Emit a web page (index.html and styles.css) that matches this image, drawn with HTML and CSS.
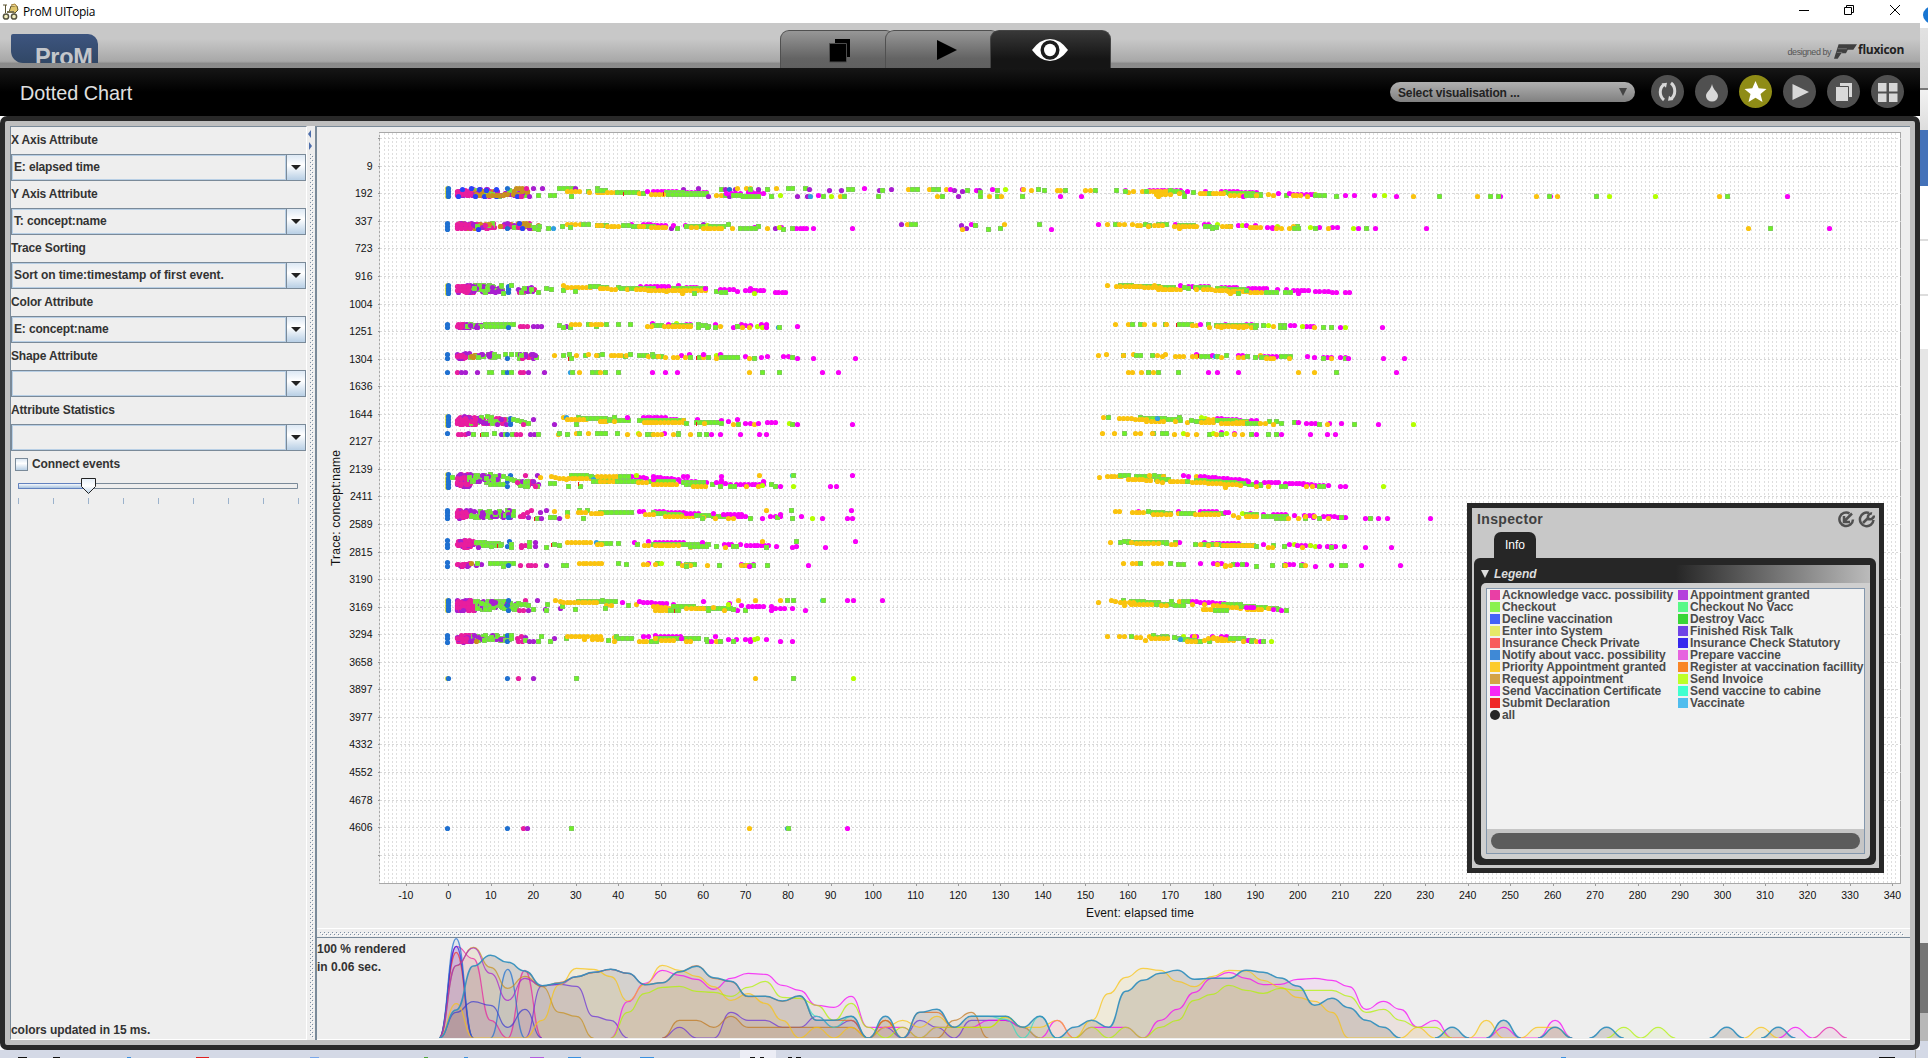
FILE: index.html
```html
<!DOCTYPE html>
<html lang="en">
<head>
<meta charset="utf-8">
<title>ProM UITopia</title>
<link rel="stylesheet" href="styles.css">
</head>
<body>
<div class="desktop">
  <div class="app">
    <header class="titlebar">
      <svg class="app-icon" width="17" height="18" viewBox="0 0 17 18"><path d="M1 2h4M3.500 2v8M7 9l2-6 6 0 1 4-3 3z" stroke="#5b5330" fill="#e0c56a"/><path d="M9 2l4-1 2 3" fill="#f4dc91" stroke="#a8843a"/><g fill="#f4f0c0" stroke="#55523f" stroke-width="1.500"><circle cx="4" cy="13.500" r="2.600"/><circle cx="12" cy="13.500" r="2.600"/></g><path d="M5 9h7" stroke="#77704e" stroke-width="2"/></svg>
      <span class="window-title">ProM UITopia</span>
      <svg class="window-controls" width="110" height="23" viewBox="1795 0 110 23" fill="none" stroke="#000"><path d="M1799 10.500h10"/><path d="M1844.500 7.500h7v7h-7zM1846.500 7v-1.500h7v7H1852"/><path d="M1890 5l10 10M1900 5l-10 10"/></svg>
    </header>
    <nav class="ribbon">
      <div class="logo"><span>ProM</span></div>
      <div class="tabs">
        <div class="tab"><svg width="24" height="26" viewBox="0 0 24 26"><path d="M7 2h15v18H7z" fill="#000"/><path d="M1.500 6.500h17v18.500h-17z" fill="#000" stroke="#4c4c4c"/></svg></div>
        <div class="tab"><svg width="22" height="22" viewBox="0 0 22 22"><path d="M1 1l20 10L1 21z"/></svg></div>
        <div class="tab tab-active"><svg width="36" height="22" viewBox="0 0 36 22"><path d="M0 11Q8 0 18 0T36 11Q28 22 18 22T0 11z" fill="#fff"/><ellipse cx="18" cy="11" rx="9.500" ry="9.800" fill="#1c1c1c"/><ellipse cx="18" cy="11" rx="6" ry="6.200" fill="#fff"/></svg></div>
      </div>
      <div class="credit"><span class="by">designed by</span>
        <svg width="23" height="17" viewBox="0 0 25 18"><path d="M5 1h20l-4 6h-6l-2 4H8l-4 6H0z" fill="#3f3f3f"/><path d="M4 6h10M3 10h6" stroke="#777"/></svg>
        <span class="flux">fluxicon</span></div>
    </nav>
    <div class="viewbar">
      <h1>Dotted Chart</h1>
      <div class="picker"><span>Select visualisation ...</span><i></i></div>
      <div class="tools">
        <div class="tool"><svg viewBox="0 0 33 33" fill="none" stroke="#d8d8d8" stroke-width="3"><path d="M13 9.500C8 13 8 21 13 25M20 8c5 4 5 12 0 16"/><path d="M10.500 8.500l5.500-.8-1 5zM22.500 25l-5.500.8 1-5z" fill="#d8d8d8" stroke="none"/></svg></div>
        <div class="tool"><svg viewBox="0 0 33 33"><path d="M17 9c1 6 6 8 6 12a6 5.500 0 0 1-12 0c0-4 5-6 6-12z" fill="#d8d8d8"/></svg></div>
        <div class="tool tool-on"><svg viewBox="0 0 33 33"><path d="M16.500 6l3.200 7.200 7.800.7-6 5.200 2 7.900-7-4.300L9.500 27l2-7.900-6-5.200 7.800-.7z" fill="#fff"/></svg></div>
        <div class="tool"><svg viewBox="0 0 33 33"><path d="M9.500 9l16.500 8-16.500 8z" fill="#d8d8d8"/></svg></div>
        <div class="tool"><svg viewBox="0 0 33 33"><path d="M13 8h12v14H13z" fill="#d8d8d8"/><path d="M8.500 11.500h13v15h-13z" fill="#d8d8d8" stroke="#505050"/></svg></div>
        <div class="tool"><svg viewBox="0 0 33 33" fill="#d8d8d8"><path d="M7 8h8.500v8.500H7zM18 8h8.500v8.500H18zM7 18.500h8.500V27H7zM18 18.500h8.500V27H18z"/></svg></div>
      </div>
    </div>
    <main class="frame">
      <aside class="settings">
        <label>X Axis Attribute</label><div class="combo"><span>E: elapsed time</span><b></b></div>
        <label>Y Axis Attribute</label><div class="combo"><span>T: concept:name</span><b></b></div>
        <label>Trace Sorting</label><div class="combo"><span class="wide">Sort on time:timestamp of first event.</span><b></b></div>
        <label>Color Attribute</label><div class="combo"><span>E: concept:name</span><b></b></div>
        <label>Shape Attribute</label><div class="combo"><span></span><b></b></div>
        <label>Attribute Statistics</label><div class="combo"><span></span><b></b></div>
        <div class="check"><i></i><span>Connect events</span></div>
        <svg class="slider" width="296" height="30" viewBox="11 477 296 30">
          <defs><linearGradient id="fillg" x2="0" y2="1"><stop offset="0" stop-color="#fff"/><stop offset="1" stop-color="#9dbbdc"/></linearGradient><linearGradient id="knob" x2="0" y2="1"><stop offset="0" stop-color="#e4eef8"/><stop offset=".5" stop-color="#fff"/><stop offset="1" stop-color="#b8cfe5"/></linearGradient></defs>
          <path d="M18.500 483.500h279v5h-279z" fill="#eee" stroke="#7a8a99"/><path d="M18.500 483.500h66v5h-66z" fill="url(#fillg)" stroke="#6382bf"/>
          <path d="M18.500 498v6m35-6v6m35-6v6m35-6v6m35-6v6m35-6v6m35-6v6m35-6v6m35-6v6" stroke="#9bb2cc"/>
          <path d="M81.500 478.500h14v8l-7 7-7-7z" fill="url(#knob)" stroke="#222"/>
        </svg>
        <div class="status">colors updated in 15 ms.</div>
      </aside>
      <div class="split-v"><svg width="8" height="914" viewBox="307 126 8 914">
        <defs><pattern id="grip" x="310" y="2" width="4" height="4" patternUnits="userSpaceOnUse"><path d="M0 0h1v1H0zM2 2h1v1H2z" fill="#7c8ea2"/><path d="M1 1h1v1H1zM3 3h1v1H3z" fill="#fff"/></pattern></defs>
        <path d="M310 154h4v884h-4z" fill="url(#grip)"/>
        <path d="M311 130v8l-3-4z" fill="#4c6dab"/><path d="M309 142v8l3-4z" fill="#4c6dab"/></svg></div>
      <section class="views">
        <svg id="chart" class="chart" width="1593" height="801" viewBox="317 127 1593 801"></svg>
        <div class="split-h"><svg width="1593" height="9" viewBox="317 928 1593 9">
          <defs><pattern id="griph" x="320" y="932" width="4" height="4" patternUnits="userSpaceOnUse"><path d="M0 0h1v1H0zM2 2h1v1H2z" fill="#7c8ea2"/><path d="M1 1h1v1H1zM3 3h1v1H3z" fill="#fff"/></pattern></defs>
          <path d="M320 932h1584v4H320z" fill="url(#griph)"/><path d="M317 928.500h1593" stroke="#fff"/></svg></div>
        <div class="density">
          <svg id="density" width="1593" height="101" viewBox="317 938 1593 101"></svg>
          <p>100 % rendered<br>in 0.06 sec.</p>
        </div>
      </section>
    </main>
  </div>
  <div class="behind"><i class="orb"></i><i class="b1"></i><i class="b2"></i><i class="b3"></i><i class="b4"></i><i class="b5"></i><i class="b6"></i></div>
</div>
<footer class="taskbar"><svg width="1928" height="8" viewBox="0 1050 1928 8"><path d="M740 1050h36v8h-36z" fill="#ecedf5"/><path d="M18 1057.500h9M53 1057.500h7M750 1057.500h5m5 0h4m24 0h4m4 0h5M1879 1057.500h16" stroke="#111"/><path d="M196 1057.500h13" stroke="#e02020"/><path d="M530 1057.500h14" stroke="#b45ce0"/><path d="M568 1057.500h13m59 0h14M127 1057.500h4M464 1057.500h4M1561 1057.500h5" stroke="#3a90e0"/><path d="M310 1057.500h9" stroke="#7aa7ea"/><path d="M424 1057.500h4" stroke="#4ea63a"/><path d="M1915.500 1050v8" stroke="#aaa"/></svg></footer>

<section class="inspector">
  <div class="insp-head"><strong>Inspector</strong>
    <svg width="37" height="17" viewBox="0 0 37 17" fill="none" stroke="#505050" stroke-width="2.500"><path d="M11.500 2.300A6.800 6.800 0 1 0 15 8.500M14 2.500L6 10.500M6 5v6h6"/><path d="M31 2A6.800 6.800 0 1 0 35.500 9"/><path d="M25 12l6-6M30 8c-1-4 2-6 4-5.500M30 8c3 1 6-1 6-3.500"/></svg></div>
  <div class="insp-tab">Info</div>
  <div class="insp-body">
    <div class="legend-head"><i></i><em>Legend</em></div>
    <div class="legend-wrap"><div class="legend-box">
      <div id="legend" class="legend"></div>
      <div class="scroll"><i></i></div>
    </div></div>
  </div>
</section>
<script src="chart.js"></script>
</body>
</html>
```
FILE: styles.css
```css
* { box-sizing: border-box; }
body { margin: 0; width: 1928px; height: 1058px; overflow: hidden; font: bold 12px "Liberation Sans", Arial, sans-serif; color: #333; background: #fff; }
svg { display: block; flex: none; }
.desktop { display: grid; grid-template-columns: 1920px 8px; height: 1050px; }
.app { display: flex; flex-direction: column; background: #fff; }
.titlebar { height: 23px; display: flex; align-items: center; background: #fff; }
.app-icon { margin-left: 2px; }
.window-title { margin-left: 4px; font: 12px "Open Sans", "Noto Sans", sans-serif; letter-spacing: -.35px; color: #000; flex: 1; }
.window-controls { margin-right: 15px; }

.ribbon { height: 45px; display: grid; grid-template-columns: 780px 331px 1fr; background: linear-gradient(#c8c8c8 35%, #a8a8a8 85%, #8a8a8a 90%, #8c8c8c); }
.logo { width: 87px; height: 29px; margin: 11px 0 0 11px; border-radius: 2px 10px 0 12px; background: linear-gradient(#3d557f, #314766); overflow: hidden; }
.logo span { display: block; margin: 12px 0 0 24px; font-size: 23.500px; line-height: 23px; color: #c4c6ca; letter-spacing: -.3px; }
.tabs { display: flex; align-items: flex-end; }
.tab { width: 115px; height: 38px; margin-right: -10px; border: 1px solid #505050; border-bottom: 0; border-radius: 9px 9px 0 0; background: linear-gradient(#979797, #636363 75%, #606060); display: flex; justify-content: center; align-items: center; }
.tab + .tab { padding-left: 8px; }
.tab:first-child { padding-left: 4px; }
.tab.tab-active { width: 121px; margin: 0; padding: 0 1px 0 0; background: linear-gradient(#383838, #151515 75%); border-color: #444; }
.credit { display: flex; justify-content: flex-end; align-items: center; padding: 12px 16px 0 0; font-size: 10px; }
.by { font-weight: normal; font-size: 9px; color: #555; margin-right: 3px; letter-spacing: -.45px; }
.flux { font: bold 12px "Open Sans", sans-serif; color: #222; letter-spacing: -.3px; margin: -5px 0 0 1px; }

.viewbar { height: 48px; display: flex; align-items: center; padding: 0 16px 0 20px; background: linear-gradient(#161616, #000 50%); }
.viewbar h1 { flex: 1; margin: 0; padding-top: 2px; font-weight: normal; font-size: 19.800px; color: #e0e0e0; }
.picker { width: 245px; height: 20px; border-radius: 10px; background: linear-gradient(#b0b0b0, #808080); display: flex; align-items: center; justify-content: space-between; padding: 1px 8px 0; color: #222; margin-right: 16px; }
.picker span { letter-spacing: -.13px; }
.picker i { border: 4px solid transparent; border-top: 8px solid #444; border-bottom: 0; margin-top: -2px; }
.tools { display: flex; gap: 11px; margin-top: -1px; }
.tool { width: 33px; height: 33px; border-radius: 50%; background: #505050; }
.tool-on { background: #8f8c16; }

.frame { flex: 1; border: 5px solid #282828; padding: 5px; border-radius: 7px; background: #bebebe; display: grid; grid-template-columns: 297px 8px 1595px; }
.settings { background: #eee; border: 1px solid #7a8a99; border-width: 1px 0 0 1px; border-bottom: 1px solid #fff; border-right: 1px solid #fff; display: flex; flex-direction: column; }
.settings label { height: 27px; line-height: 26px; letter-spacing: -.15px; }
.combo { height: 27px; border: 1px solid #7a8a99; display: grid; grid-template-columns: 1fr 19px; letter-spacing: -.15px; }
.combo span { border: 1px solid #b8cfe5; padding-left: 1px; line-height: 22px; }
.combo .wide { letter-spacing: -.08px; }
.combo b { border-left: 1px solid #7a8a99; background: linear-gradient(#dce8f4, #fff 40%, #b8cfe5); display: flex; align-items: center; justify-content: center; }
.combo b::after { content: ""; border: 5px solid transparent; border-top-color: #222; border-bottom: 0; }
.check { height: 26px; display: flex; align-items: center; gap: 4px; padding-left: 4px; letter-spacing: -.1px; }
.check i { width: 13px; height: 13px; border: 1px solid #7a8a99; background: linear-gradient(#dce8f4, #fff 40%, #b8cfe5); }
.status { margin-top: auto; height: 19px; line-height: 20px; letter-spacing: -.06px; }
.split-v { background: #eee; overflow: hidden; }
.views { display: flex; flex-direction: column; border-left: 2px solid #7a8a99; border-top: 1px solid #7a8a99; background: #eee; }
.split-h { height: 10px; border-bottom: 1px solid #7a8a99; }
.density { height: 102px; position: relative; border-bottom: 2px solid #fff; }
.density p { position: absolute; left: 0; top: 2px; margin: 0; line-height: 18px; }
.chart text { font-weight: normal; font-size: 10.500px; fill: #111; }
.chart .axis { font-size: 12px; }

.behind { display: flex; flex-direction: column; background: linear-gradient(#fff 28px, #e6e6e6 28px); overflow: hidden; }
.orb { width: 20px; height: 18px; margin: 6px 0 4px 3px; border-radius: 50%; background: #1976d2; box-shadow: 0 0 0 1px #fff; flex: none; }
.b1 { height: 102px; background: linear-gradient(#e2e2e2, #d5d5d5 60px, #777 60px, #777 62px, #f2f2f2 62px, #ddd); }
.b2 { height: 56px; background: #4472b9; }
.b3 { height: 163px; background: repeating-linear-gradient(#fff 0 53px, #ddd 53px 55px); }
.b4 { height: 594px; background: #e6e6e6; }
.b5 { height: 70px; background: #757575; }
.b6 { flex: 1; background: linear-gradient(#b8b8b8 28px, #d4d9e6 28px); }
.taskbar { height: 8px; background: #d4d9e6; }

.inspector { position: absolute; left: 1467px; top: 503px; width: 417px; height: 370px; border: 5px solid #282828; background: #c8c8c8; padding: 0 3px 3px 2px; display: flex; flex-direction: column; }
.insp-head { height: 24px; display: flex; justify-content: space-between; align-items: center; padding: 0 1px 2px 3px; font-size: 14px; color: #404040; }
.insp-head strong { letter-spacing: .35px; margin-top: -1px; }
.insp-tab { width: 42px; height: 26px; margin-left: 20px; border-radius: 7px 7px 0 0; background: #262626; color: #fff; text-align: center; line-height: 26px; font-weight: normal; }
.insp-body { flex: 1; border-radius: 6px; background: #262626; padding: 7px 6px 6px 7px; display: flex; flex-direction: column; }
.legend-head { height: 18px; display: flex; align-items: center; gap: 5px; color: #ddd; background: linear-gradient(90deg, #262626 50%, #bbb); }
.legend-head i { border: 4.500px solid transparent; border-top: 8px solid #ddd; border-bottom: 0; }
.legend-wrap { flex: 1; border-radius: 5px 0 5px 5px; background: #cfcfcf; padding: 5px; }
.legend-box { height: 100%; border: 1px solid #8397ad; background: #f1f1f1; display: flex; flex-direction: column; }
.legend { flex: 1; padding: 0 0 0 3px; display: grid; grid-template-columns: 188px 1fr; grid-auto-rows: 12px; align-content: start; color: #4b4b4b; letter-spacing: -.08px; }
.legend div { display: flex; align-items: center; gap: 2px; white-space: nowrap; }
.legend i { width: 10px; height: 10px; flex: none; }
.legend .dot { border-radius: 50%; }
.scroll { height: 24px; background: #c6c6c6; padding: 4px; }
.scroll i { display: block; height: 16px; border-radius: 8px; background: #5c5c5c; }
```
FILE: chart.js
```js
/* ---- legend ---- */
var legend = [['#e93fa5','Acknowledge vacc. possibility'],['#b43fdc','Appointment granted'],['#8af24f','Checkout'],['#57f987','Checkout No Vacc'],
['#4462f7','Decline vaccination'],['#38d636','Destroy Vacc'],['#e6ea68','Enter into System'],['#6f42e6','Finished Risk Talk'],
['#f85c5c','Insurance Check Private'],['#3627ee','Insurance Check Statutory'],['#3f89d6','Notify about vacc. possibility'],['#e663df','Prepare vaccine'],
['#fccb2b','Priority Appointment granted'],['#f98626','Register at vaccination facillity'],['#d3a347','Request appointment'],['#bdff27','Send Invoice'],
['#f627f6','Send Vaccination Certificate'],['#3fffcf','Send vaccine to cabine'],['#ef2727','Submit Declaration'],['#4fbdee','Vaccinate'],['#262626','all']];
document.getElementById('legend').innerHTML = legend.map(function (l) {
  return '<div><i' + (l[1] === 'all' ? ' class="dot"' : '') + ' style="background:' + l[0] + '"></i>' + l[1] + '</div>';
}).join('');

/* ---- dotted chart ---- */
var out = [];
out.push('<rect x="379.5" y="132.500" width="1521" height="751" fill="#fff" stroke="#a8a8a8"/>');
var vx = '', v;
for (v = -16; v <= 341; v++) vx += 'M' + (Math.floor(448.3 + v * 4.2465 - .5) + .5) + ' 133V883';
out.push('<path d="' + vx + '" stroke="#dedede" stroke-dasharray="2 2" fill="none"/>');
var names = [9,192,337,723,916,1004,1251,1304,1636,1644,2127,2139,2411,2589,2815,3190,3169,3294,3658,3897,3977,4332,4552,4678,4606];
for (v = -1; v <= 25; v++) {
  var gy = Math.round(165.7 + v * 27.56) + .5;
  out.push('<path d="M380 ' + gy + 'H1901" stroke="#d8d8d8" stroke-dasharray="2 2"/><path d="M378 ' + gy + 'h2" stroke="#999"/>');
  if (v >= 0 && v < 25) out.push('<text x="372.500" y="' + (gy + 3) + '" text-anchor="end">' + names[v] + '</text>');
}
for (v = -10; v <= 340; v += 10) {
  var tx = 448.3 + v * 4.2475;
  out.push('<path d="M' + (Math.round(tx) + .5) + ' 884v2" stroke="#999"/><text x="' + tx + '" y="898.500" text-anchor="middle">' + v + '</text>');
}
out.push('<text class="axis" x="1086" y="917" textLength="108">Event: elapsed time</text>');
out.push('<text class="axis" transform="translate(340 566) rotate(-90)" textLength="116">Trace: concept:name</text>');

var colors = { b:'#1f70d0', p:'#e81e9e', v:'#a81ed0', o:'#fac30f', m:'#f800f8', l:'#b4ff00', k:'#2a42f8', t:'#c8901e', c:'#38e0c8', s:'#30a0e0', y:'#e0e04f' };
var seed = 7;
function rnd() { seed = (seed * 16807) % 2147483647; return seed / 2147483647; }
function dot(c, x, y) {
  x = Math.round(x - .3); y = Math.round(y - .3);
  if (c === 'g') out.push('<rect x="' + (x - 2) + '" y="' + (y - 2) + '" width="5" height="5" fill="#86bd72"/><circle cx="' + (x + .5) + '" cy="' + (y + .5) + '" r="2.300" fill="#70ee2c"/>');
  else if (c === 'r') out.push('<rect x="' + (x - 2) + '" y="' + (y - 1) + '" width="1" height="4" fill="#ef1b1b"/>');
  else out.push('<circle cx="' + (x + .5) + '" cy="' + (y + .5) + '" r="2.600" fill="' + colors[c] + '"/>');
}
/* token: color x[-x2] @ y[-y2]; a leading * scatters #n events over the box */
function plot(x0, y0, sx, text) {
  text.trim().split(/\s+/).forEach(function (t) {
    var m = /^(\*?)([a-z]+)([\d.]+)(?:-([\d.]+))?@([\d.]+)(?:-([\d.]+))?(?:#(\d+))?$/.exec(t);
    if (!m) return;
    var a = +m[3], b = m[4] ? +m[4] : a, c = +m[5], d = m[6] ? +m[6] : c, i, n, f;
    if (m[1]) {
      n = Math.round(m[7] * 1.5);
      for (i = 0; i < n; i++) dot(m[2][Math.floor(rnd() * m[2].length)], x0 + (a + (b - a) * rnd()) / sx, y0 + (c + (d - c) * rnd()) / 3);
      return;
    }
    n = Math.max(Math.round(Math.abs(b - a) / 11.5), Math.round(Math.abs(d - c) / 9), 0);
    for (i = 0; i <= n; i++) { f = n ? i / n : 0; dot(m[2], x0 + (a + (b - a) * f) / sx, y0 + (c + (d - c) * f) / 3); }
  });
}
plot(420, 160, 3, `
y81@84-110 b86@84-110 *pv112-210@88-108#40 *gvt160-330@92-108#45 p112-150@94 p112-150@102 k128@89 k155@86 k178@87 k200@90 k229@88 k115@109 k166@108 k193@109 k229@109 b263@84 t290-308@85 p319@85 v340@85 t205-250@105 k292@109 p304@108 v328@109 v367@85 g355@106 g391-403@106 g418-456@85 g454@109 v466@85 o442-478@94 g505@94 o508@97 g532@86 o532-550@97 g532-555@92 o562-586@98 g592-652@97 r616@100 o658@100 g670@100 m683@94 m700-860@94-97 v790@88 v836@86 g740-860@97-100 o694-730@102 g745-850@103 r735@100 v865@109 g905@88 v915@88 b928@88 v945@88 o953@84 o978-990@85 o890-905@106 g916@106 v928@109 m920-960@100 m985-1030@97-100 g940-960@106 g970-1000@108 g1015@109 g992@88 v1016@88 g1042@88 g1054@109 o1069@85 l1081@106 g1105-1117@86 g1156@86 v1168@88 v1132@109 v1162@109 s1172@109 m1195@106 g1210@109 v1228@91 l1234@109 o1262@109 g1273@109 v1264@91 g1285-1297@88 m1333@85 g1375@109 v1378@91 g1387@91 v1414@88
b83@190-208 *pvt110-215@190-206#30 p112-150@192 p112-150@204 *gvtp160-360@190-206#45 k175@207 b263@205 k298@190 k307@206 g385@205 s400@205 g355@209 g428@199 o442-480@193 g451@202 g490-505@193 g532-560@196 o532-545@195 o562-595@198 m634@192 g610-625@196 m670-735@193-196 g640-700@200 o658-670@199 o694-736@203 v754@205 m760@196 g772@205 m797@196 v850@192 g800-850@200 o815-830@202 l862@196 m874@198 g925@194 g870-910@200 o850-905@204 o937@204 g962@205 m1003-1010@202 g1015@199 g975-1005@205 o1042@205 v1065@205 m1083@202 l1078@203 g1090@208 m1130-1160@205 g1117@205 m1180@205 m1297@205
y81@376-400 b86@376-400 *pv112-160@376-398#25 *ggv155-250@376-398#34 p112-145@380 p112-145@392 b266@380-398 g273@376 g251@400 v226@397 *gpv290-345@383-398#12 g379@385 g394@388 g355@397 g430@391 o430@377 o442-510@382 g466@394 g510-560@378-382 g595@382 o540-585@384-388 g605-625@384 m661@379 o622@388 g634@386 m680-745@380 m775@376 m800-830@382 g640-700@385 g760-855@386 o650-740@388-393 o745-855@392 o787@400 g823@400 m855@385 g890@395 m900-940@388 m952@394 g905-917@397 m976-1000@391 m1000-1030@392 m991@386 l1003@400 m1066-1096@396
b83@493-503 *pv112-150@492-503#22 p112-136@498 *gv140-190@493-503#12 v172@502 g196-280@493 g200-256@500 b265@502 p300-322@498 v340-364@500 g418@496 v440@499 g430@502 g451@502 o454@493 o466-478@493 g505@493 g529@499 o515-545@493 g560@493 g595@493 g631@493 m697@491 g700-724@496 o683-695@498 m745@493 l770@491 m800-812@492 g760-810@496 o733-812@500 g835-865@493-499 g835@502 g862@502 m886@493 g886@502 o901@499 m940@502 m965@493 m977-990@496 g952@499 o967@502 o988@502 l1013@499 m1025-1039@494 l1027@502 m1039@502 s1076@502 g1079@502 m1132@499
b83@583-595 *pv112-150@581-595#22 p112-150@588-592 *gvt150-240@581-592#16 g229@590 v205@583 g256@583 g274@583 b263@595 *gpv290-350@581-595#12 o403@586 g430@586 g448@583 r450@594 g454@595 o469@586 g496@586 o505@583 g532@586 g547@583 o529@587 o574-605@587 g617@589 o619@587 g631@583 g658-680@587 o685@589 g697@584 g700-724@588 o715@590 o736@592 m784@586 m808@583 o760-772@592 g810@592 o797@592 g838@592 r835@591 o850@591 m850@583 g865@592 l888@586 m901@583 o888@595 g905-952@592 m976@590 o988@595 g1003@595 m1024@592 m1042@590 m1090-1105@590 g1117@592 m1132@595 m1180@595 m1306@595
b83@637 p112@637 v124-136@637 v172@637 g208-214@637 g250@637 b263@637 g275@637 p300-310@637 v325@637 v373@637 s450@637 g456@637 o479@637 g517-532@637 o541@637 g556@637 g595@637 m697@637 m735@637 m772@637 o989@637 g1027@637 g1077@637 m1207@637 m1255@637
y81@770-796 b86@770-796 *pv112-160@770-794#30 p112-140@782 p112-140@790 *ggvp150-260@770-792#38 b270@775-793 g280-325@778-790 p310@793 v340@778 v403@793 s469@790 g469@793 o430@773 o442-500@777 s440@773 g475-580@773-777 o442-490@779 o542-560@784 g568-625@781 g583@773 o583@784 m622@772 g658@782 m670-735@773 m750-770@777 g670-790@780 o672-690@786 o700-720@787 o733-790@788 o790@782 g800@790 m832@778 g830-895@787 r836@789 o853@791 m904@781 g904@790 m925@784 m952@778 o940@793 g956@793 m976-990@790 o1003@793 m1015@790 m1042-1066@787 l1108@790 g1116@793 m1132@793 m1297@793
b83@820-824 p115-135@822 v145@820 g160@823 g190-200@822 r187@823 g223@820 v244@823 g256@823 b263@822 g277@823 p290-302@823 v331-343@823 g355@823 o415@823 g418@821 g442@823 o469@820 g478@820 o505@820 g532-556@820 g592@820 o622@823 l655@820 o658@823 g682@823 m733@820 g697@823 o700-725@823 g775@820 o760@823 g775@823 o811@823 g838@823 g860@823 m874@823 m901@823 m961@823 m1018@823 m1039@823
y81@944-982 b86@944-982 g97@952 *pv112-150@944-980#38 p112-150@956 p112-150@970 *ggv145-240@944-966#40 g210-250@972 b270@946 b263@963 b263@979 g250-295@950-964 p316@946 v352@946 *pvg290-360@962-980#14 o361@952 g391-403@969 g445@979 g482@979 r482@970 o395-440@950-958 g455-500@945 o445-510@956 g515-595@950-956 o532-590@948 s520@958 g520-560@963 o540-580@964 m635-680@948-954 g601-625@950 l648@945 g592-660@964 m700-775@950-958 m790-802@950 g690-760@963 o655-680@968 o700-770@972 m700@958 m780-860@964-966 g790-850@968 g800-850@973 o820-855@979 m904@950-960 g877@973 m890-930@968-972 g901@979 m950-1030@972 g932-944@979 m1030@964 o979@979 o1018@946 o1015@979 l1028@976 g1054@973 g1066@979 m1081@979 c1117@946 g1120@946 l1119@979 m1231@979 m1249@979 m1297@946
b83@1050-1074 *pv112-150@1050-1074#28 p112-140@1058 p112-140@1070 *ggv150-280@1050-1072#38 b265@1072 p300-334@1070-1052 v361@1058 v379@1051 v325@1072 p310@1070 g352@1074 r349@1074 v364@1074 g391-403@1072 v418@1075 o403@1054 g442@1056 o442@1068 g478@1052 g502@1050 o475-495@1057 g540-575@1056 o515-545@1060 g490@1075 g590-635@1058 m658-670@1054 m706-790@1054-1058 g700-800@1058-1066 o676-700@1064 o735-820@1070 m800-835@1060 g830-870@1066 g880-910@1070 o850@1072 m880@1060 m910-965@1064 o886@1075 o925-940@1074 g848@1074 m955-975@1068 o1039@1051 g991@1074 m1027@1076 m1050@1070 m1066-1080@1068 g1072@1073 m1081@1063 g1114@1051 g1117@1074 m1144@1069 l1177@1076 m1207@1076 m1295@1051 m1283@1076 m1297@1076`);
plot(420, 520, 3, `
b83@62-82 *pvp112-165@62-82#30 p112-150@72 g170-245@66-72 g175-230@76 v175@82 g215@80 g241@76 r238@76 b267@64 b263@80 g275@82 g275@72 p305-316@76 p305@82 g328@66 g328@78 v347@66 v347@78 g379@82 g403@73 r400@73 g418@76 o442-512@68 s529@66 g540-570@69 o532-545@73 g595@70 m643@67 g652@73 m685@65 o672-685@76 m706-790@68 g700-790@72 o706-760@76 o775@76 g800-865@74 m847@68 o811@82 g810-860@79 g889@79 m913-935@73 o917@82 m961@73 g940-950@80 m980-1045@76 o1027@65 g1039@82 m1069@79 g1128@65 m1117@82 m1129@79 m1216@82 m1306@65
b83@128-138 *pv112-150@130-138#14 t155@131 v168@136 v185@133 g172@130 g210-280@130 g250@139 b265@136 p301@136 p325-345@136 v379@136 g430-440@136 o478-545@130 g595@131 g619@133 m685@130 o670-682@133 m712@130 g712@131 l724@130 o706@133 m777@130 g775@131 g800-822@132 o786-810@135 g799@139 g898@136 o862@136 m965@133 m1000@133 g976-1000@135 o965-980@136 m988@139 g1042@136 m1165@136
y81@240-272 b86@240-272 *pv112-165@240-272#42 p112-145@250 p112-145@262 g165-250@245-258 *ggv170-290@242-268#38 v130@270 b265@241 b263@256 b264@271 p316@241 g295-325@250-256 p298-310@271 v353@241 v325@271 g340@267 g382@253 v375@268 g379@271 o407@241 o420@244 v422@265 g427@258 g466@268 g475-585@244 o430-530@248 o560-575@256 g547@240 g557@265 m607@247 g625@256 o650@253 m658@244 m670-740@247-250 o700-760@258-265 m760@252 g760-820@258 m850@244 o705-740@271 g750-775@270 r770@271 g832-930@264 o800-850@266 g865@271 o880@262 m928@250 l925@253 o955@241 o913@271 m952@271 m964@256 g976@271 m985-1030@260 m1054@260 m1066-1093@266 m1054@271 o1006@241 o1081@241 g1103@241 g1120@241 m1117@265 c1207@241 g1210@241 m1156@270 m1282@241 m1300@241 m1387@241 g940@268
b83@345-367 *pvp112-160@345-366#30 p112-140@356 *ggv160-280@346-362#34 t170@364 b263@346 b263@364 g275@355 g274@346 p292@355 p295-307@364 p304@350 v316@352 g316@360 v328-340@364 g364@349 g355@364 v403@355 g391@364 g439@355 o442@349 o454-540@350 o493@358 o517-545@358 g565@361 o583@352 g590@349 g595-635@356 o583@364 m670-685@349 m706@347 m720-780@349 o658-680@364 g694-710@364 g710-800@355 o706@355 o725-760@360 m785@355 g812-835@356 o800-812@364 g860@358 m886@349 g863@364 m874@364 o889@364 g901@364 m925@358 m950@358 g940@364 m976-990@358 l1003@358 m990@364 l1013@355 m1039@358 m1081@364 m1117@364
y81@475 b85@475 b263@475 p295@475 v340@475 g469@475 o1006@475 g1120@475 l1300@475
b83@925 b263@925 p310@925 v322@925 g454@925 o988@925 s1101@925 g1105@925 m1282@925`);
plot(740, 0, 2.613, `
o440@568 g450-462@569 o494@568 g505-518@568 o538@568 m550@568 v560@572 v581@574 g594@571 m618@571 v624@571 g628@577 g628@589 o515@589 g529@589 v571@589 m659@568 g672@571 l694@568 m738@568 o740@568 o760@571 g780@568 g795@571 o828@571 o838@571 g850@571 g738@589 m837@589 o652@589 g673@589 o684@589 m892@589
v422@673 o437@673 g448-458@673 v578@676 m604@673 g616@676 v592@685 o582@688 o691@673 g649@688 g681@685 g782@673 m814@688`);
plot(1080, 170, 3, `
o16@61 o32@61 g47@61 g109@61 m136@61 o145@67 g136@64 o160@64 m208-300@60 o187-285@65 g200@64 g270-305@62-66 o230-270@72 o235@79 g313@70-79 m322@64 g340@67 o298@70 m376@64 o361-380@70 g388@70 m424-530@64-67 g436-540@68-72 o400-430@71 o450-490@75 m490@79 g500-540@75 o530@76 o565@72 m595@70 o580@76 g619@76 m628@70 m640-690@73 o640-660@76 m700@72 o682@79 l706@72 g706@76 g718@76 g733@76 g769@79 m796@76 m823@76 m883@76 l913@76 m949@79 o1000@79 g1078@79 o1192@79 g1231@79 m1260@79 g1254@79 o1369@79 m1412@79 g1408@79 o1432@79
m55@163 o82@163 g106@163 o118@163 o133@163 o157@163 o172-182@166 g195@163 g208@166 o205@169 g235-260@163 o222-247@167 m286@163 g298-340@166 o284-350@168 o298@175 m373-385@163 l412@162 g376-410@169-172 g397@175 g450@169 o427-451@170 m475@166 l487@166 m500@166 m525@167 o511-540@172 m562-577@172 l592@170 m577@175 o590-604@175 g652@170 o640@169 o628@175 g643-655@175 l691@172 m718@172 g706@175 m757-772@172 o745@175 l820@175 m835@175 g859@175 m885@175 m1039@175
o82@346 g120-280@346-352 o109-160@348 o170-240@350-352 o222@346 o235-300@357 m301@346 m325-337@349 g313@351 g325@355 m361-385@348 g345-385@352 o349@357 m424-470@352 g412-500@355-360 o370-440@358-361 m505-560@355 o445-500@364 o451@370 g475@370 m592@358 m619@357 m560@358 o510-545@367 g500@362 g560-590@366 m640-685@361 g616-632@367 m655@370 m706-745@364 m757-769@367 m796-808@367
o106@463 o145@463 g157@463 g181@463 o193@463 o222@463 g256@463 o260@463 g298-334@463 r295@463 o337-349@466 m361@463 g386@464 o388@472 m436@463 m500-514@463 g410-530@467 o412-500@468 o424@473 o475-490@472 o514@472 g526@472 g551@466 l565@466 o580@469 g601-613@466 g601-613@472 m631-643@466 m680-700@469 l667@469 o704@472 g730@472 g754@472 m781@472 l796@472 m907@472
o55@556 o79@553 g130@555 o130@555 o160@553 g169-181@555 g217@556 o232@556 o256@553 o247@559 o286-310@558 m349@553 o337-349@559 g364-388@559 r361@557 m397@556 s405@559 g412@559 o424@562 g439@556 m475-487@556 o475-490@562 g502@559 m540-590@559 o540@556 g526@562 g545-560@562 o560-580@564 g604-630@560 o628@565 m682@559 m703@562 m730-755@562 g730@565 o754@565 m781@562 m796@562 g796@565 m805@565 m910@565 m973@565
o145@607 o157@607 o183@607 g205@607 g235@607 o220@607 g295@607 m385@607 m411@607 m475@607 o655@607 o703@607 g769@607 m949@607
o70@742 g85@742 g180-300@743-748 o118-200@745-748 o200-250@753 s232@745 o286@753 g298@742 g301@751 o322@757 g334@751 l364@742 l376@745 m412-480@745-750 g350-375@754 o364-400@757 o385-400@748 g412-510@750-754 o424-490@759 m514-530@751 g568@754 g590@754 g604@760 o470-500@757 g502-535@760 o540-556@760 o580@763 g643@757 m655@757 m680-706@760 g718@763 m748@760 o742@763 m784@760 g823@763 m895@763 l1000@763
o67@790 o103@790 g133@790 o166@790 o181@790 g220@790 o217@790 g247-260@790 o283@793 l310@790 o322@793 o349@793 g388@793 l400@790 m424@788 g424@793 o409@793 l439@790 m463@790 o463@793 o487@793 g514@793 m529@793 g565@793 g590@793 m604@793 m691@793 m742@793 m766@793
o58@922 o82-125@919 g120-145@916 g170-250@918-920 o208@916 g222@915 o250@919 o145-210@927-930 g230-265@928 o232@934 o247@937 o270-325@934 g323@934 m310@916 m325@919 o349@919 m361-430@919-925 m430-500@925-931 g350-540@930-944 o337-480@936-945 m505@934 m530@936 m553-595@937 o565@949 g541@946 m616-670@940 m670-730@943-946 g604-616@949 o679@949 o697@949 m745@946 g718-730@949 m781-796@949 l910@949 o436@953 o530@949`);
plot(1080, 500, 3, `
o106-118@34 m175@33 o157-190@36 g205-270@35-40 o220-270@42 m295@34 o295@40 g305-340@40 m361-410@35 g370-430@40 o345-415@43 m436-446@38 l487@40 o460@46 m510@40 g500-530@42 o475@53 o498-530@50 m550@43 m580-615@43 g550-620@49 g590-615@55 o625@55 m643@46 o655@55 m673-700@46 m700@52 g676@55 o676@50 o703@50 m730-796@48-52 g718@55 o745@55 g784@52 m856@55 g871@55 m895@55 m922@55 m1051@55
o91@127 g121@127 g133-145@124 g145-260@127 o155@127 o170-205@129 o220-235@129 g260@130 m298@127 g286@127 o274-286@133 g346@133 m373@127 m397-475@129 g370-520@133-137 o361@133 o385@136 o409@133 o430-520@137 g530@139 m550@133 g580@136 o565-577@142 g613@139 m628@133 l643@133 m652-690@137 l691@137 l706@140 m718@139 o667@142 m742-766@139 g754@142 m793@139 m856@142 m934@142
o130@190 o157-170@190 g181@190 g271@190 o220-245@191 g295-310@193 m361@190 m400-425@190 o411@193 g460@193 o435-450@195 m472-500@193 g487@193 o436@199 g529@199 g577@196 m616-640@193 g613@196 o616@196 m667@193 g664@196 o676@196 m706@199 m754@196 g796@196 o784@196 g784@196 m844@196 m961@196
o55@307 o94@301 o106@304 g130@301 g155-235@304-307 o121-160@307 o133@316 o155-225@312 g230-310@312-316 g274@304 o298@304 g310@303 o245-260@316 g325@303 m337-420@304-310 o337@313 o374@312 m420-480@309-315 g430-480@312 o400-480@316-324 g485-590@318-325 o370-400@329 g406-440@330 o502-545@328 m500-520@322 o565@325 m580@328 g595@327 m604@331 g620@331
o82@409 o118-133@410 g154@409 o169-181@411 o196@421 o208@409 g220@407 g247-260@408 g235-262@413 o214-262@414 g283@412 l310@408 m337-349@408 o343@408 g298-355@415-424 s302@418 o322-345@424 g361@424 o373@421 g388@424 m397@408 m424-440@409 o385-400@415 o400-460@412-420 o412-445@421 g450-490@416 g490-520@420 o490@424 m505@421 g515@424 o530@424 m540@424 g550@424 l575@424`);
plot(1328, 0, 2.613, 'g701@589 l735@589 l855@589 o1023@589 g1044@589 m1201@589 o1099@685 g1156@685 m1310@685');
document.getElementById('chart').innerHTML = out.join('');

/* ---- density curves: heights sampled every 17.17px, 474 = baseline ---- */
/* [color, fill opacity, first sample, heights] */
var Z = 474, MAIN = '#3590be', curves = [
['#e81e9e', .10, -1, [Z,199,236,421,Z,271,Z]],
['#f03030', .08, -1, [Z,217,Z]],
['#2b1ee8', .10, -1, [Z,199,Z]],
['#1f70d0', .06, -1, [Z,176,Z]],
['#1f70d0', .06, 2, [Z,268,Z]],
['#c8901e', .10, -1, [Z,257,202,262,325,289,320,397,409,Z]],
['#a81ed0', 0, -1, [Z,257,204,280,361,295,317,313,290,277,268,280,314]],
['#3b3bd0', .06, -1, [Z,397,365,376,442,388,Z]],
['#6a2fd8', .07, 4, [Z,317,313,319,409,421,Z]],
['#6a2fd8', .07, 12, [Z,442,Z,Z,397,421,421,442,442,409,442,421,Z,442,Z,421,442,Z,421,421,421,442,Z]],
['#c07820', .10, 12, [Z,421,421,442,409,442,442,442,442,442,442,442,Z,421,Z,Z,Z,421,397,Z]],
['#f800f8', .06, 9, [Z,365,310,271,286,298,328,295,280,283,316,331,376,382,349,442,442,442,Z,442,442,442,421,421,442,Z,421,Z,442,442,442,Z,421,388,337,295,277,295,314,313,298,295,301,320,388,364,388,442,421,Z,Z,Z,442,Z,Z,421,Z]],
['#f800f8', .06, 77, [Z,442,Z]],
['#e818a8', .08, 79, [Z,442,Z]],
['#fac30f', .09, -1, [Z,371,Z,Z,Z,Z,421,315,265,268,290,363,313,256,271,289,320,361,341,370,421,Z,442,Z,442,Z,442,421,442,409,442,442,442,412,442,442,421,Z,421,341,292,265,271,304,320,290,271,273,301,322,352,364,397,Z,Z,Z,Z,442,Z,Z,Z,421,Z,Z,442,442,Z]],
['#fac30f', .09, 75, [Z,442,Z]],
['#b0f400', .07, 9, [Z,397,340,322,319,334,337,349,322,304,352,355,376,421,370,442,Z,442,Z,442,442,442,442,409,442,Z,Z,Z,442,Z,442,Z,442,421,361,343,316,331,340,325,331,331,331,349,397,388,421,442,442,Z]],
['#b0f400', .07, 67, [Z,442,Z,442,Z]],
['#2fdfc0', 0, 20, [349,409,442,409,Z]],
['#2fdfc0', 0, 30, [409,409,418,Z,409,Z]],
['#e06a20', 0, 4, [274,319,308,291,278,268,280,314,308,276,257,295,305,350,349,364,348,421,421,421,Z,421,Z,397,397,442]],
[MAIN, .2, -1, [Z,390,258,226,247,273,317,310,290,277,268,280,314,308,275,259,293,304,349,349,363,347,421,421,409,Z,409,Z,397,388,442,409,409,409,442,409,Z,442,421,442,334,301,280,271,298,295,295,271,277,294,318,376,355,383,421,442,Z]],
[MAIN, .2, 57, [Z,442,Z]],
[MAIN, .2, 60, [Z,421,Z]],
[MAIN, .2, 63, [Z,442,Z]],
[MAIN, .2, 66, [Z,442,Z]],
[MAIN, .2, 73, [Z,442,Z]],
[MAIN, .2, 76, [Z,442,Z]]
];
var layers = '', lines = '';
curves.forEach(function (c) {
  var X = function (k) { return 456.2 + 17.17 * (c[2] + k); }, Y = function (y) { return 880 + y / 3; }, d = '', main = c[0] === MAIN;
  c[3].forEach(function (y, k) {
    if (!k) { d = 'M' + X(0) + ' ' + Y(y); return; }
    var mid = X(k - .5);
    d += 'C' + mid + ' ' + Y(c[3][k - 1]) + ' ' + mid + ' ' + Y(y) + ' ' + X(k) + ' ' + Y(y);
  });
  if (c[1]) layers += '<path d="' + d + 'V1038H' + X(0) + 'z" fill="' + (main ? '#6d6050' : c[0]) + '" fill-opacity="' + c[1] + '"/>';
  lines += '<path d="' + d + '" fill="none" stroke="' + c[0] + '" stroke-opacity="' + (main ? .95 : .72) + '" stroke-width="' + (main ? 1.5 : 1.2) + '"/>';
});
document.getElementById('density').innerHTML = layers + lines + '<path d="M317 1038.500H1910" stroke="#eee"/>';
```
